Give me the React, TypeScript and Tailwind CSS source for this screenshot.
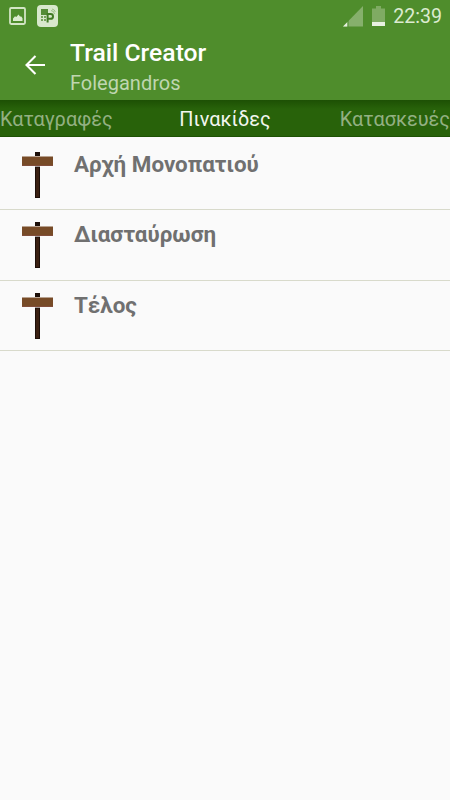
const signs = ["Αρχή Μονοπατιού", "Διασταύρωση", "Τέλος"];

function StatusBar() {
  return (
    <div className="flex h-8 items-center text-[#dcebd0]">
      <svg className="ml-[9px] shrink-0" width="17" height="18" viewBox="0 0 17 18">
        <rect x="1" y="1" width="15" height="16" rx="1.2" fill="none" stroke="#d3e5c5" strokeWidth="1.8" />
        <path d="M4 14V11.5L6 9.2L7.3 10L9.5 7.5L11 9.4L12.3 9.4L13.5 11.2V14Z" fill="#dcebd0" />
      </svg>
      <svg className="ml-[11px] shrink-0" width="21" height="22" viewBox="0 0 21 22">
        <rect width="21" height="22" rx="4" fill="#d8e8cc" />
        <rect x="4" y="4" width="7" height="6" fill="#548c36" />
        <path d="M4 11h2v2H4zM7 11h2v2H7zM4 14h2v2H4zM7 14h2v2H7z" fill="#75a15a" />
        <path d="M10.6 17.5V9H13.6a2.1 2.1 0 0 1 0 4.8H11" fill="none" stroke="#427b25" strokeWidth="2" />
        <path d="M14 5.5a4 4 0 0 1 3.5 3.5M15 4a4 4 0 0 1 3.3 3" fill="none" stroke="#8bb274" strokeWidth="0.8" />
      </svg>
      <div className="grow" />
      <svg className="shrink-0" width="20" height="21" viewBox="0 0 20 21">
        <path d="M20 0V20.5H0Z" fill="#86b06c" />
        <path d="M0 20.5L4.5 16V20.5Z" fill="#e8f1e1" />
        <path d="M5 14V21" stroke="#4f8d2c" />
      </svg>
      <svg className="ml-[9px] shrink-0" width="13" height="20" viewBox="0 0 13 20">
        <path d="M0 2.5h4V0h5v2.5h4V16H0Z" fill="#7fab63" />
        <rect y="16" width="13" height="4" fill="#e8f1e1" />
      </svg>
      <span className="mr-2 ml-2 pt-0.5 text-[19.6px] leading-[30px]">22:39</span>
    </div>
  );
}

function SignPost() {
  return (
    <svg className="ml-[22px] shrink-0" width="31" height="47" viewBox="0 0 31 47">
      <rect x="13" y="0" width="5" height="4" fill="#1c0e08" />
      <rect x="0" y="4.5" width="31" height="9" fill="#774b27" />
      <rect x="0" y="13" width="31" height="0.7" fill="#6b2a18" />
      <rect x="13" y="14.6" width="5" height="31.4" fill="#1c0e08" />
      <rect x="14" y="15.5" width="3" height="29.5" fill="#3a2012" />
    </svg>
  );
}

export default function App() {
  return (
    <div className="h-[800px] w-[450px] overflow-hidden bg-[#fafafa] font-['Roboto','Noto_Sans',sans-serif]">
      <header className="h-[100px] bg-[#4f8d2c]">
        <StatusBar />
        <div className="flex">
          <svg className="mt-[23px] ml-[25px] shrink-0" width="20" height="20" viewBox="0 0 20 20" fill="none" stroke="white" strokeWidth="2.1">
            <path d="M20 10H2M10.5 1L1.5 10L10.5 19" />
          </svg>
          <div className="ml-[25px] pt-1.5">
            <h1 className="text-[24.7px] leading-[30px] font-medium text-white">Trail Creator</h1>
            <p className="text-xl leading-[30px] text-[#bfd6b0]">Folegandros</p>
          </div>
        </div>
      </header>
      <nav className="grid h-[37px] grid-cols-3 items-center border-b border-[#1e5205] bg-[#28620a] bg-linear-to-b from-[#1d5004] to-[#28620a] to-25% pt-1 text-[19.9px] whitespace-nowrap text-[#93b082]">
        <span>Καταγραφές</span>
        <span className="text-center text-[#f2f6ef]">Πινακίδες</span>
        <span className="text-right">Κατασκευές</span>
      </nav>
      <ul>
        {signs.map((sign, i) => (
          <li key={sign} className={`flex border-b border-[#d8dacb] ${i === 1 ? "h-[71px] pt-3" : i === 0 ? "h-[73px] pt-[15px]" : "h-[70px] pt-3"}`}>
            <SignPost />
            <span className="ml-[21px] text-[22.4px] leading-6 font-bold text-[#707070]">{sign}</span>
          </li>
        ))}
      </ul>
    </div>
  );
}
